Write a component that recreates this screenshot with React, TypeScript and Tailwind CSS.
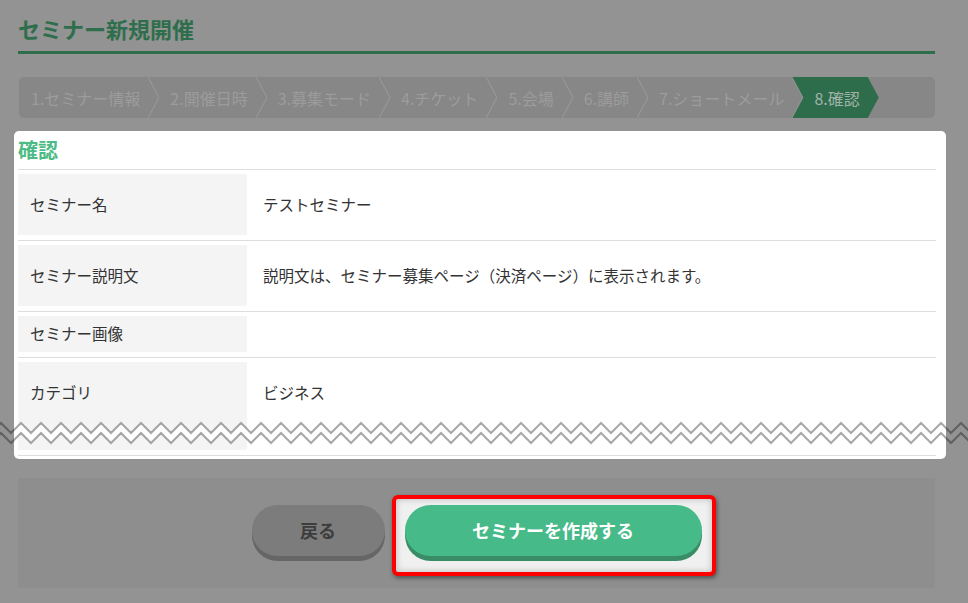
import type { ReactNode } from "react";

const steps = [
	"1.セミナー情報",
	"2.開催日時",
	"3.募集モード",
	"4.チケット",
	"5.会場",
	"6.講師",
	"7.ショートメール",
];

const Chevron = () => (
	<svg width="11" height="41" viewBox="0 0 11 41" className="shrink-0">
		<polyline points="0,0 11,20.5 0,41" fill="none" stroke="#9b9b9b" strokeWidth="1" />
	</svg>
);

const Row = ({
	label,
	value,
	thClass,
}: {
	label: string;
	value?: ReactNode;
	thClass: string;
}) => (
	<div className="flex pt-[4px] pb-[5px] border-b border-[#dddddd]">
		<div className={`w-[229px] shrink-0 bg-[#f4f4f4] pl-[12px] text-[#333333] ${thClass}`}>
			{label}
		</div>
		<div className={`flex-1 pl-[16px] text-[#333333] ${thClass} bg-white`}>{value}</div>
	</div>
);

// zigzag points, period 20px
const zig = (offset: number, from: number, to: number) => {
	const pts: string[] = [];
	let i = 0;
	for (let x = from; x <= to; x += 10) {
		pts.push(`${x},${(i % 2 === 0 ? 4 : 14) + offset}`);
		i++;
	}
	return pts;
};

const Zigzag = () => {
	const top = zig(0, -19, 989);
	const bottom = zig(10, -19, 989);
	const fill = [...top, ...bottom.slice().reverse()].join(" ");
	return (
		<svg
			width="968"
			height="28"
			viewBox="0 0 968 28"
			className="absolute left-0 top-[419px] pointer-events-none">
			<defs>
				<clipPath id="cardclip">
					<rect x="14" y="0" width="932" height="28" />
				</clipPath>
			</defs>
			<polygon points={fill} fill="#ffffff" clipPath="url(#cardclip)" />
			<polyline points={top.join(" ")} fill="none" stroke="rgba(0,0,0,0.34)" strokeWidth="2" />
			<polyline points={bottom.join(" ")} fill="none" stroke="rgba(0,0,0,0.34)" strokeWidth="2" />
		</svg>
	);
};

export default function App() {
	return (
		<div
			className="relative w-[968px] h-[603px] overflow-hidden bg-[#939393]"
			style={{ fontFamily: '"Noto Sans CJK JP", "Noto Sans", sans-serif' }}>
			<div className="ml-[18px] w-[917px]">
				{/* heading */}
				<div className="pt-[13px] pb-[8px] border-b-[3px] border-[#2f6e4c]">
					<h1 className="text-[22px] leading-[30px] font-bold text-[#2f6e4c]">
						セミナー新規開催
					</h1>
				</div>

				{/* steps */}
				<div className="mt-[23px] ml-[1px] h-[41px] rounded-[5px] bg-[#878787] flex items-stretch text-[16px] text-[#9c9c9c] overflow-hidden">
					{steps.map((s, i) => (
						<div key={s} className="flex items-stretch">
							<span
								className={`flex items-center whitespace-nowrap pr-[8px] ${
									i === 0 ? "pl-[12px]" : "pl-[11px]"
								}`}>
								{s}
							</span>
							<Chevron />
						</div>
					))}
					<div className="relative -ml-[11px] flex items-center whitespace-nowrap pl-[22px] pr-[19px] bg-[#2d6d4b] text-[#a2b2a9] [clip-path:polygon(0_0,calc(100%-11px)_0,100%_50%,calc(100%-11px)_100%,0_100%,11px_50%)]">
						8.確認
					</div>
				</div>

				{/* card */}
				<div className="mt-[13px] -ml-[4px] -mr-[11px] rounded-[5px] bg-white pl-[4px] pr-[10px] pb-[3px]">
					<div className="pt-[5px] pb-[5px] border-b border-[#dddddd]">
						<h2 className="text-[20px] leading-[28px] font-bold text-[#4dbb85]">確認</h2>
					</div>
					<div className="text-[15.5px]">
						<Row label="セミナー名" value="テストセミナー" thClass="h-[61px] flex items-center" />
						<Row
							label="セミナー説明文"
							value="説明文は、セミナー募集ページ（決済ページ）に表示されます。"
							thClass="h-[61px] flex items-center"
						/>
						<Row label="セミナー画像" thClass="h-[36px] flex items-center" />
						<Row label="カテゴリ" value="ビジネス" thClass="h-[88px] pt-[18px] leading-[24px]" />
					</div>
				</div>

				{/* footer */}
				<div className="mt-[19px] h-[110px] bg-[#8e8e8e] flex justify-center items-start gap-[20px] pt-[27px]">
					<button className="w-[133px] h-[51px] rounded-full bg-[#7c7c7c] shadow-[0_5px_0_#666666] text-[18px] font-bold text-[#3d3d3d]">
						戻る
					</button>
					<div className="relative">
						<div className="absolute -left-[13px] -top-[10px] -right-[14px] -bottom-[20px] rounded-[6px] border-4 border-[#ff0000] bg-[#f0f0f0] shadow-[inset_0_0_7px_rgba(0,0,0,0.22),1px_2px_4px_rgba(0,0,0,0.45)]" />
						<button className="relative w-[297px] h-[51px] rounded-full bg-[#46ba88] shadow-[0_5px_0_#3a8c67] text-[18px] font-bold text-white">
							セミナーを作成する
						</button>
					</div>
				</div>
			</div>

			<Zigzag />
		</div>
	);
}
